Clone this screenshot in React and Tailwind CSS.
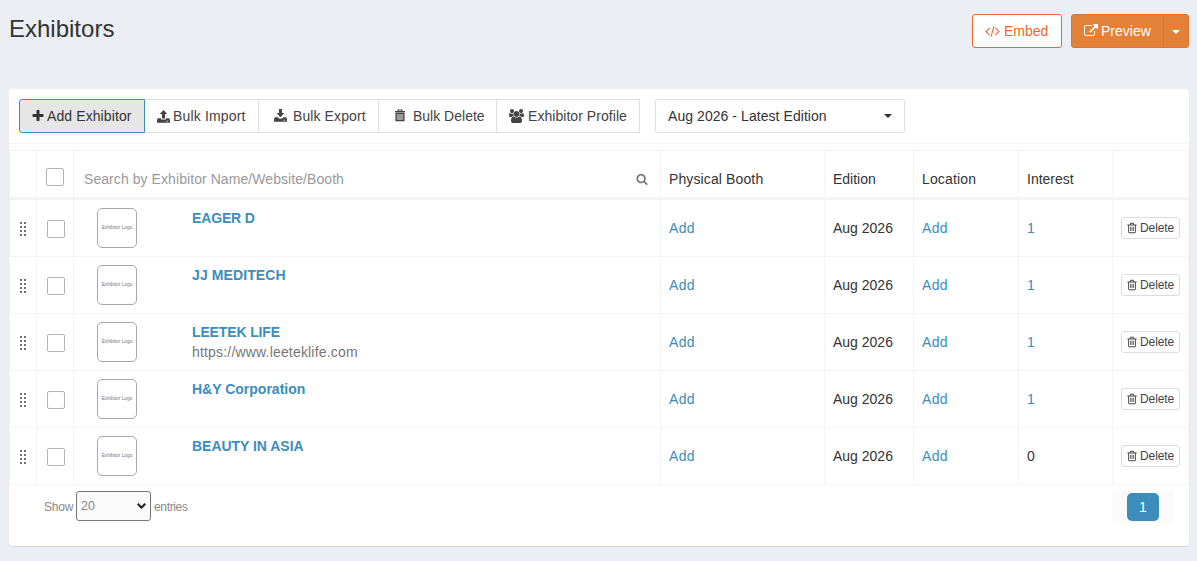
import React from "react";

const PATHS = {
  external:
    "M1408 928v320q0 119-84.5 203.5t-203.5 84.5h-832q-119 0-203.5-84.5t-84.5-203.5v-832q0-119 84.5-203.5t203.5-84.5h704q14 0 23 9t9 23v64q0 14-9 23t-23 9h-704q-66 0-113 47t-47 113v832q0 66 47 113t113 47h832q66 0 113-47t47-113v-320q0-14 9-23t23-9h64q14 0 23 9t9 23zm384-864v512q0 26-19 45t-45 19-45-19l-176-176-652 652q-10 10-23 10t-23-10l-114-114q-10-10-10-23t10-23l652-652-176-176q-19-19-19-45t19-45 45-19h512q26 0 45 19t19 45z",
  code: "M617 1399l-50 50q-10 10-23 10t-23-10l-466-466q-10-10-10-23t10-23l466-466q10-10 23-10t23 10l50 50q10 10 10 23t-10 23l-393 393 393 393q10 10 10 23t-10 23zm591-1067l-373 1291q-4 13-15.5 19.5t-23.5 2.5l-62-17q-13-4-19.5-15.5t-2.5-24.5l373-1291q4-13 15.5-19.5t23.5-2.5l62 17q13 4 19.5 15.5t2.5 24.5zm657 651l-466 466q-10 10-23 10t-23-10l-50-50q-10-10-10-23t10-23l393-393-393-393q-10-10-10-23t10-23l50-50q10-10 23-10t23 10l466 466q10 10 10 23t-10 23z",
  search:
    "M1216 832q0-185-131.5-316.5t-316.5-131.5-316.5 131.5-131.5 316.5 131.5 316.5 316.5 131.5 316.5-131.5 131.5-316.5zm512 832q0 52-38 90t-90 38q-54 0-90-38l-343-342q-179 124-399 124-143 0-273.5-55.5t-225-150-150-225-55.5-273.5 55.5-273.5 150-225 225-150 273.5-55.5 273.5 55.5 225 150 150 225 55.5 273.5q0 220-124 399l343 343q37 37 37 90z",
  trash:
    "M704 736v576q0 14-9 23t-23 9h-64q-14 0-23-9t-9-23v-576q0-14 9-23t23-9h64q14 0 23 9t9 23zm256 0v576q0 14-9 23t-23 9h-64q-14 0-23-9t-9-23v-576q0-14 9-23t23-9h64q14 0 23 9t9 23zm256 0v576q0 14-9 23t-23 9h-64q-14 0-23-9t-9-23v-576q0-14 9-23t23-9h64q14 0 23 9t9 23zm128 724v-948h-896v948q0 22 7 40.5t14.5 27 10.5 8.5h832q3 0 10.5-8.5t14.5-27 7-40.5zm-672-1076h448l-48-117q-7-9-17-11h-317q-10 2-17 11zm928 32v64q0 14-9 23t-23 9h-96v948q0 83-47 143.5t-113 60.5h-832q-66 0-113-58.5t-47-141.5v-952h-96q-14 0-23-9t-9-23v-64q0-14 9-23t23-9h309l70-167q15-37 54-63t79-26h320q40 0 79 26t54 63l70 167h309q14 0 23 9t9 23z",
  plus: "M1600 736v192q0 40-28 68t-68 28h-416v416q0 40-28 68t-68 28h-192q-40 0-68-28t-28-68v-416h-416q-40 0-68-28t-28-68v-192q0-40 28-68t68-28h416v-416q0-40 28-68t68-28h192q40 0 68 28t28 68v416h416q40 0 68 28t28 68z",
  group:
    "M593 896q-162 5-265 128h-134q-82 0-138-40.5t-56-118.5q0-353 124-353 6 0 43.5 21t97.5 42.5 119 21.5q67 0 133-23-5 37-5 66 0 139 81 256zm1071 637q0 120-73 189.5t-194 69.5h-874q-121 0-194-69.5t-73-189.5q0-53 3.5-103.5t14-109 26.5-108.5 43-97.5 62-81 85.5-53.5 111.5-20q10 0 43 21.5t73 48 107 48 135 21.5 135-21.5 107-48 73-48 43-21.5q61 0 111.5 20t85.5 53.5 62 81 43 97.5 26.5 108.5 14 109 3.5 103.5zm-1024-1277q0 106-75 181t-181 75-181-75-75-181 75-181 181-75 181 75 75 181zm704 384q0 159-112.5 271.5t-271.5 112.5-271.5-112.5-112.5-271.5 112.5-271.5 271.5-112.5 271.5 112.5 112.5 271.5zm576 225q0 78-56 118.5t-138 40.5h-134q-103-123-265-128 81-117 81-256 0-29-5-66 66 23 133 23 59 0 119-21.5t97.5-42.5 43.5-21q124 0 124 353zm-128-609q0 106-75 181t-181 75-181-75-75-181 75-181 181-75 181 75 75 181z",
};

function Icon({ name, box = "0 0 1792 1792", className }) {
  return (
    <svg viewBox={box} fill="currentColor" className={`shrink-0 ${className}`}>
      <path d={PATHS[name]} />
    </svg>
  );
}

function ImportIcon() {
  return (
    <svg viewBox="0 0 13 13" fill="currentColor" className="h-[13px] w-[13px] shrink-0">
      <path d="M6.5 0L10.3 4H8v4.6H5V4H2.7zM.8 8.2H4v1.3h5V8.2h3.2L13 10v2.3q0 .5-.5.5H.5q-.5 0-.5-.5V10zM9.4 10.7v.9h1.8v-.9z" fillRule="evenodd" />
    </svg>
  );
}

function ExportIcon() {
  return (
    <svg viewBox="0 0 13 13" fill="currentColor" className="mb-px h-[13px] w-[13px] shrink-0">
      <path d="M5 0h3v4h2.4L6.5 8.3 2.6 4H5zM.8 8.2h2.7l2 1.6h2l2-1.6h2.7L13 10v2.3q0 .5-.5.5H.5q-.5 0-.5-.5V10zM9.4 10.7v.9h1.8v-.9z" fillRule="evenodd" />
    </svg>
  );
}

function BinIcon() {
  return (
    <svg viewBox="0 0 12 13" className="mb-px h-[13px] w-[12px] shrink-0" fill="none" stroke="currentColor">
      <path d="M1 2.7H11" strokeWidth="1.4" />
      <path d="M4 2.3V1H8V2.3" strokeWidth="1.1" />
      <path d="M2.1 4.3H9.9V11.7H2.1Z" fill="#9b9b9b" strokeWidth="1.3" />
    </svg>
  );
}

function Caret({ className }) {
  return (
    <svg viewBox="0 0 8 4" fill="currentColor" className={`h-[4px] w-[8px] shrink-0 ${className}`}>
      <path d="M0 0h8L4 4z" />
    </svg>
  );
}

function Grip() {
  return (
    <svg viewBox="0 0 6 14" fill="#6f6f6f" className="h-[14px] w-[6px]">
      {[0, 4, 8, 12].map((y) => (
        <g key={y}>
          <rect x="0" y={y} width="2" height="2" />
          <rect x="4" y={y} width="2" height="2" />
        </g>
      ))}
    </svg>
  );
}

const COLS = "grid grid-cols-[27px_37px_587px_164px_89px_105px_94px_76px] border-l border-[#f4f4f4]";
const CELL = "border-r border-[#f4f4f4]";
const BOX = "h-[18px] w-[18px] rounded-[2px] border border-[#b4b4b4] bg-white";

const ROWS = [
  { name: "EAGER D", interest: "1", track: "tracking-[-0.15px]" },
  { name: "JJ MEDITECH", interest: "1", track: "tracking-[0.1px]" },
  { name: "LEETEK LIFE", url: "https://www.leeteklife.com", interest: "1", track: "tracking-[-0.14px]" },
  { name: "H&Y Corporation", interest: "1", track: "tracking-[0px]" },
  { name: "BEAUTY IN ASIA", interest: "0", track: "tracking-[-0.03px]" },
];

function Row({ row }) {
  return (
    <div className={`${COLS} h-[57px] border-b`}>
      <div className={`${CELL} flex justify-center pt-[22px]`}>
        <Grip />
      </div>
      <div className={`${CELL} pt-[20px] pl-[10px]`}>
        <div className={BOX} />
      </div>
      <div className={`${CELL} flex pt-[8px] pl-[23px]`}>
        <div className="flex h-[40px] w-[40px] items-center justify-center rounded-[5px] border border-[#a8a8a8] pb-px text-[4.8px] leading-[6px] whitespace-nowrap text-[#777]">
          Exhibitor Logo
        </div>
        <div className="ml-[55px]">
          <div className={`h-5 font-bold text-[#3c8dbc] ${row.track}`}>{row.name}</div>
          {row.url && <div className="tracking-[0.18px] text-[#777]">{row.url}</div>}
        </div>
      </div>
      <div className={`${CELL} pt-[18px] pl-[8px] tracking-[0.3px] text-[#3c8dbc]`}>Add</div>
      <div className={`${CELL} pt-[18px] pl-[8px]`}>Aug 2026</div>
      <div className={`${CELL} pt-[18px] pl-[8px] tracking-[0.3px] text-[#3c8dbc]`}>Add</div>
      <div className={`${CELL} pt-[18px] pl-[8px] ${row.interest === "1" ? "text-[#3c8dbc]" : ""}`}>{row.interest}</div>
      <div className={`${CELL} pt-[17px] pl-[8px]`}>
        <div className="flex h-[22px] w-[59px] items-center rounded-[3px] border border-[#ddd] pl-[4px] text-[12px] tracking-[-0.1px] text-[#444]">
          <Icon name="trash" className="mr-[2px] h-[12px] w-[12px]" />
          Delete
        </div>
      </div>
    </div>
  );
}

const TOOL = "flex h-[34px] items-center border border-[#ddd] whitespace-nowrap";

export default function App() {
  return (
    <div className="h-[561px] w-[1197px] overflow-hidden bg-[#ebeef3] px-[9px] font-['Liberation_Sans',sans-serif] text-[14px] leading-5 text-[#333]">
      <header className="flex h-[89px] items-start pt-[14px]">
        <h1 className="mt-[2px] grow text-[24px] leading-[26px]">Exhibitors</h1>
        <div className="mr-[9px] flex h-[34px] w-[90px] items-center rounded-[3px] border border-[#f0652f] bg-white pl-[12px] text-[#f0652f]">
          <Icon name="code" box="0 0 1920 1792" className="mr-[4px] h-[14px] w-[15px]" />
          Embed
        </div>
        <div className="mr-[-1px] flex h-[34px] w-[118px] rounded-[3px] border border-[#df7233] bg-[#e48138] text-white">
          <div className="flex w-[92px] items-center border-r border-[#df7233] pl-[12px]">
            <Icon name="external" className="mr-[3px] h-[14px] w-[14px]" />
            Preview
          </div>
          <div className="flex grow items-center justify-center">
            <Caret className="mt-[2px]" />
          </div>
        </div>
      </header>

      <main className="h-[457px] w-[1180px] rounded-[3px] bg-white shadow-[0_1px_1px_rgba(0,0,0,0.1)]">
        <div className="flex h-[55px] border-b border-[#f4f4f4] pt-[10px] pl-[10px] text-[#444]">
          <div className="flex h-[34px] w-[126px] items-center rounded-l-[3px] border border-[#3c8dbc] bg-[#e6e6e6] pl-[11px] tracking-[0.1px] whitespace-nowrap text-[#333]">
            <Icon name="plus" className="mr-[2px] h-[14px] w-[14px]" />
            Add Exhibitor
          </div>
          <div className={`${TOOL} w-[114px] border-l-0 pl-[12px]`}>
            <ImportIcon />
            <span className="ml-[3px] tracking-[0.16px]">Bulk Import</span>
          </div>
          <div className={`${TOOL} w-[120px] border-l-0 pl-[15px]`}>
            <ExportIcon />
            <span className="ml-[6px] tracking-[0.1px]">Bulk Export</span>
          </div>
          <div className={`${TOOL} w-[118px] border-l-0 pl-[15px]`}>
            <BinIcon />
            <span className="ml-[7px]">Bulk Delete</span>
          </div>
          <div className={`${TOOL} w-[143px] border-l-0 pl-[12px] tracking-[0.05px]`}>
            <Icon name="group" box="0 0 1920 1792" className="mr-[4px] h-[14px] w-[15px]" />
            Exhibitor Profile
          </div>
          <div className="ml-[15px] flex h-[34px] w-[250px] items-center justify-between rounded-[3px] border border-[#ddd] pr-[12px] pl-[12px] tracking-[0.06px] text-[#333]">
            Aug 2026 - Latest Edition
            <Caret />
          </div>
        </div>

        <div className="mt-[6px]">
          <div className={`${COLS} h-[50px] border-t border-b-[3px]`}>
            <div className={CELL} />
            <div className={`${CELL} pt-[17px] pl-[9px]`}>
              <div className={BOX} />
            </div>
            <div className={`${CELL} flex items-start justify-between pt-[18px] pr-[12px] pl-[10px] tracking-[0.07px] text-[#999]`}>
              Search by Exhibitor Name/Website/Booth
              <Icon name="search" className="mt-[4px] h-[12px] w-[12px] text-[#777]" />
            </div>
            <div className={`${CELL} pt-[18px] pl-[8px] tracking-[0.12px]`}>Physical Booth</div>
            <div className={`${CELL} pt-[18px] pl-[8px]`}>Edition</div>
            <div className={`${CELL} pt-[18px] pl-[8px] tracking-[0.15px]`}>Location</div>
            <div className={`${CELL} pt-[18px] pl-[8px]`}>Interest</div>
            <div className={CELL} />
          </div>
          {ROWS.map((row) => (
            <Row key={row.name} row={row} />
          ))}
        </div>

        <footer className="flex items-start pt-[6px] pr-[15px] pl-[35px] text-[12px] text-[#888]">
          <span className="mt-[6px] w-[32px] tracking-[-0.2px]">Show</span>
          <div className="flex h-[30px] w-[75px] items-center justify-between rounded-[3px] border border-[#767676] bg-[#fafafa] pr-[4px] pl-[4px] text-[12.5px]">
            20
            <svg viewBox="0 0 9 6" className="h-[6px] w-[9px]" fill="none" stroke="#222" strokeWidth="2.1">
              <path d="M.7 .8L4.5 4.6 8.3 .8" />
            </svg>
          </div>
          <span className="mt-[6px] ml-[3px] grow tracking-[-0.35px]">entries</span>
          <div className="flex h-[32px] w-[62px] justify-center bg-[#fafafa] pt-[2px]">
            <div className="flex h-[28px] w-[32px] items-center justify-center rounded-[5px] bg-[#3c8dbc] text-[14px] text-white">
              1
            </div>
          </div>
        </footer>
      </main>
    </div>
  );
}
